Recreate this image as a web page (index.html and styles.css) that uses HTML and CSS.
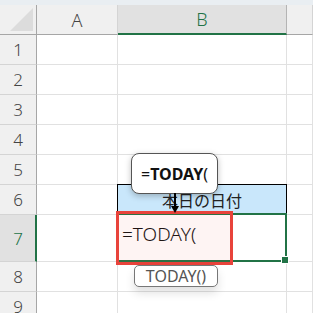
FILE: index.html
```html
<!DOCTYPE html>
<html lang="ja">

<head>
    <meta charset="UTF-8">
    <meta name="viewport" content="width=device-width, initial-scale=1.0">
    <title>TODAY</title>
    <link rel="stylesheet" href="styles.css">
</head>

<body>
    <div class="topbar"></div>
    <div class="sheet">
        <!-- 列見出し -->
        <div class="corner"><span class="tri"></span></div>
        <div class="ch">A</div>
        <div class="ch sel">B</div>
        <div class="ch"></div>

        <div class="rh">1</div><div class="cell"></div><div class="cell"></div><div class="cell"></div>
        <div class="rh">2</div><div class="cell"></div><div class="cell"></div><div class="cell"></div>
        <div class="rh">3</div><div class="cell"></div><div class="cell"></div><div class="cell"></div>
        <div class="rh">4</div><div class="cell"></div><div class="cell"></div><div class="cell"></div>
        <div class="rh">5</div><div class="cell"></div><div class="cell"></div><div class="cell"></div>
        <div class="rh">6</div><div class="cell"></div><div class="cell title">本日の日付</div><div class="cell"></div>
        <div class="rh sel">7</div><div class="cell"></div>
        <div class="cell active">
            <span class="formula">=TODAY(</span>
            <div class="focus"></div>
            <div class="mark"></div>
            <div class="bubble">=<b>TODAY</b>(</div>
            <div class="arrow"></div>
            <div class="tip">TODAY()</div>
        </div>
        <div class="cell"></div>
        <div class="rh">8</div><div class="cell"></div><div class="cell"></div><div class="cell"></div>
        <div class="rh">9</div><div class="cell"></div><div class="cell"></div><div class="cell"></div>
    </div>
</body>

</html>
```

FILE: styles.css
```css
* {
    margin: 0;
    padding: 0;
    box-sizing: border-box;
}

body {
    width: 313px;
    height: 313px;
    overflow: hidden;
    background-color: #fff;
    font-family: "Noto Sans", "Noto Sans CJK JP", sans-serif;
    color: #333;
}

.topbar {
    height: 5px;
    background-color: #e9eef2;
}

.sheet {
    display: grid;
    grid-template-columns: 37px 81px 169px 1fr;
    grid-template-rows: 30px repeat(6, 30px) 47px 30px 30px;
}

.cell {
    border-right: 1px solid #e1e1e1;
    border-bottom: 1px solid #e1e1e1;
}

/* 見出し */
.corner {
    display: flex;
    align-items: flex-end;
    justify-content: flex-end;
    padding: 0 3px 3px 0;
    background-color: #f0f0f0;
    border-right: 1px solid #a6a6a6;
    border-bottom: 1px solid #a6a6a6;
}

.corner .tri {
    width: 23px;
    height: 23px;
    background-color: #dcdcdc;
    clip-path: polygon(100% 0, 100% 100%, 0 100%);
}

.ch {
    display: flex;
    align-items: center;
    justify-content: center;
    background-color: #f0f0f0;
    border-right: 1px solid #d4d4d4;
    border-bottom: 1px solid #a6a6a6;
    font-size: 18px;
    font-weight: 300;
    color: #444;
}

.ch.sel {
    background-color: #e1e1e1;
    color: #217346;
    border-right-color: #b4b4b4;
    border-bottom: 2px solid #217346;
}

.rh {
    display: flex;
    align-items: center;
    justify-content: center;
    background-color: #f0f0f0;
    border-right: 1px solid #a6a6a6;
    border-bottom: 1px solid #d4d4d4;
    font-size: 17px;
    font-weight: 300;
    color: #444;
}

.rh.sel {
    background-color: #e1e1e1;
    color: #217346;
    border-right: 2px solid #217346;
    padding-left: 1px;
}

/* セル */
.title {
    position: relative;
    display: flex;
    align-items: center;
    justify-content: center;
    background-color: #c9e7fb;
    font-size: 16px;
    color: #222;
}

.title::after {
    content: "";
    position: absolute;
    left: -1px;
    top: -1px;
    right: -1px;
    bottom: -1px;
    border: 1px solid #000;
}

.active {
    position: relative;
    display: flex;
    align-items: center;
    padding: 0 0 8px 4px;
}

.formula {
    font-size: 19px;
    font-weight: 300;
    color: #111;
}

.focus {
    position: absolute;
    left: -1px;
    top: -2px;
    width: 170px;
    height: 49px;
    border: 2px solid #217346;
}

.focus::after {
    content: "";
    position: absolute;
    right: -4px;
    bottom: -4px;
    width: 6px;
    height: 6px;
    background-color: #217346;
    border: 1px solid #fff;
}

.mark {
    position: absolute;
    left: -2px;
    top: -4px;
    width: 117px;
    height: 54px;
    border: 3px solid #e8433b;
    background-color: rgba(232, 67, 59, .06);
    z-index: 5;
}

.bubble {
    position: absolute;
    left: 13px;
    top: -62px;
    width: 87px;
    height: 41px;
    display: flex;
    align-items: center;
    justify-content: center;
    background-color: #fff;
    border: 1px solid #555;
    border-radius: 8px;
    box-shadow: 0 2px 6px rgba(0, 0, 0, .25);
    font-size: 16px;
    color: #111;
    z-index: 10;
}

.bubble b {
    font-weight: 700;
}

.arrow {
    position: absolute;
    left: 56px;
    top: -22px;
    width: 2px;
    height: 14px;
    background-color: #000;
    z-index: 10;
}

.arrow::after {
    content: "";
    position: absolute;
    left: -3px;
    bottom: -6px;
    border-left: 4px solid transparent;
    border-right: 4px solid transparent;
    border-top: 7px solid #000;
}

.tip {
    position: absolute;
    left: 16px;
    top: 50px;
    width: 84px;
    height: 22px;
    display: flex;
    align-items: center;
    justify-content: center;
    background-color: #fff;
    border: 1px solid #777;
    border-radius: 5px;
    box-shadow: 0 6px 10px rgba(0, 0, 0, .12);
    font-size: 16px;
    color: #555;
    z-index: 10;
}
```
